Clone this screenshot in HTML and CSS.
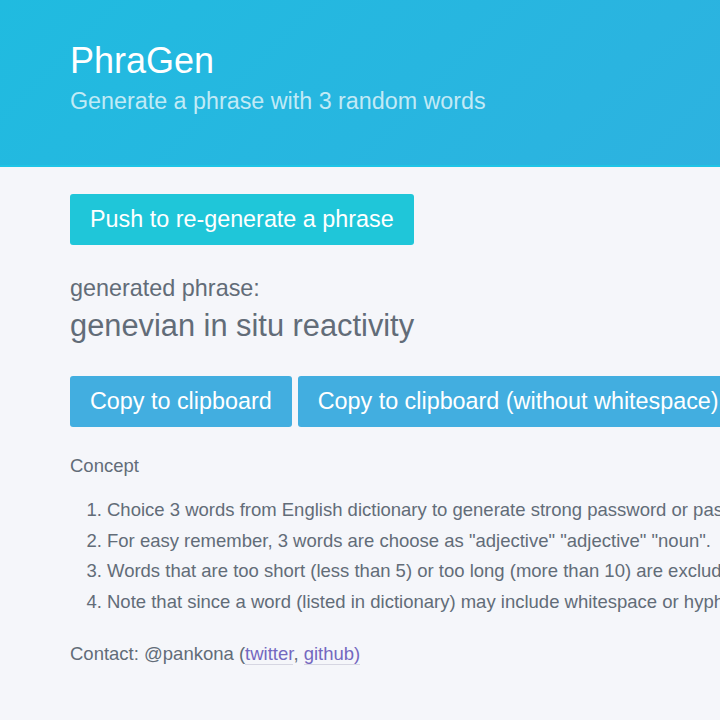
FILE: index.html
```html
<!DOCTYPE html>
<html lang="en">
<head>
<meta charset="utf-8">
<title>PhraGen</title>
<link rel="stylesheet" href="styles.css">
</head>
<body>
<header class="hero">
  <div class="container">
    <h1 class="title">PhraGen</h1>
    <p class="subtitle">Generate a phrase with 3 random words</p>
  </div>
</header>
<main class="container main">
  <button class="btn btn-primary">Push to re-generate a phrase</button>
  <div class="result">
    <p class="label">generated phrase:</p>
    <p class="phrase">genevian in situ reactivity</p>
  </div>
  <div class="actions">
    <button class="btn btn-copy">Copy to clipboard</button>
    <button class="btn btn-copy">Copy to clipboard (without whitespace)</button>
  </div>
  <section class="concept">
    <p class="concept-title">Concept</p>
    <ol class="concept-list">
      <li>Choice 3 words from English dictionary to generate strong password or passphrase.</li>
      <li>For easy remember, 3 words are choose as "adjective" "adjective" "noun".</li>
      <li>Words that are too short (less than 5) or too long (more than 10) are excluded.</li>
      <li>Note that since a word (listed in dictionary) may include whitespace or hyphen, the phrase may be longer.</li>
    </ol>
    <p class="contact">Contact: @pankona (<a href="#">twitter</a>, <a href="#">github)</a></p>
  </section>
</main>
</body>
</html>
```
FILE: styles.css
```css
html, body {
  margin: 0;
  padding: 0;
}
body {
  background: #f5f6fa;
  font-family: "Liberation Sans", Arial, sans-serif;
  color: #626c78;
  overflow: hidden;
  width: 720px;
}
.container {
  padding: 0 70px;
  white-space: nowrap;
}
.hero {
  height: 165px;
  background: linear-gradient(135deg, #20bbe0 0%, #2db2e0 100%);
  border-bottom: 2px solid #1fc4e6;
  box-sizing: content-box;
}
.title {
  margin: 0;
  padding-top: 41px;
  font-weight: normal;
  font-size: 36px;
  line-height: 40px;
  color: #ffffff;
}
.subtitle {
  margin: 5px 0 0;
  font-size: 23.3px;
  line-height: 30px;
  color: rgba(255, 255, 255, 0.72);
}
.main {
  padding-top: 27px;
}
.btn {
  font-family: "Liberation Sans", Arial, sans-serif;
  font-size: 23.35px;
  line-height: 27px;
  color: #ffffff;
  border: none;
  border-radius: 3px;
  padding: 12px 20px;
  height: 51px;
  cursor: pointer;
  white-space: nowrap;
}
.btn-primary {
  background: #1fc6d9;
}
.btn-copy {
  background: #42aee0;
  flex: none;
}
.result {
  margin-top: 29px;
}
.label {
  margin: 0;
  font-size: 23.4px;
  line-height: 28px;
}
.phrase {
  margin: 4px 0 0;
  font-size: 30.8px;
  line-height: 40px;
}
.actions {
  display: flex;
  gap: 6px;
  margin-top: 30px;
}
.concept {
  margin-top: 24px;
  font-size: 18.5px;
}
.concept-title {
  margin: 0;
  line-height: 30px;
}
.concept-list {
  margin: 14px 0 0;
  padding-left: 37px;
}
.concept-list li {
  line-height: 30.7px;
}
.contact {
  margin: 21px 0 0;
  line-height: 30px;
}
.contact a {
  color: #7468c0;
  text-decoration: none;
  border-bottom: 1px solid #d6d6e2;
}
```
